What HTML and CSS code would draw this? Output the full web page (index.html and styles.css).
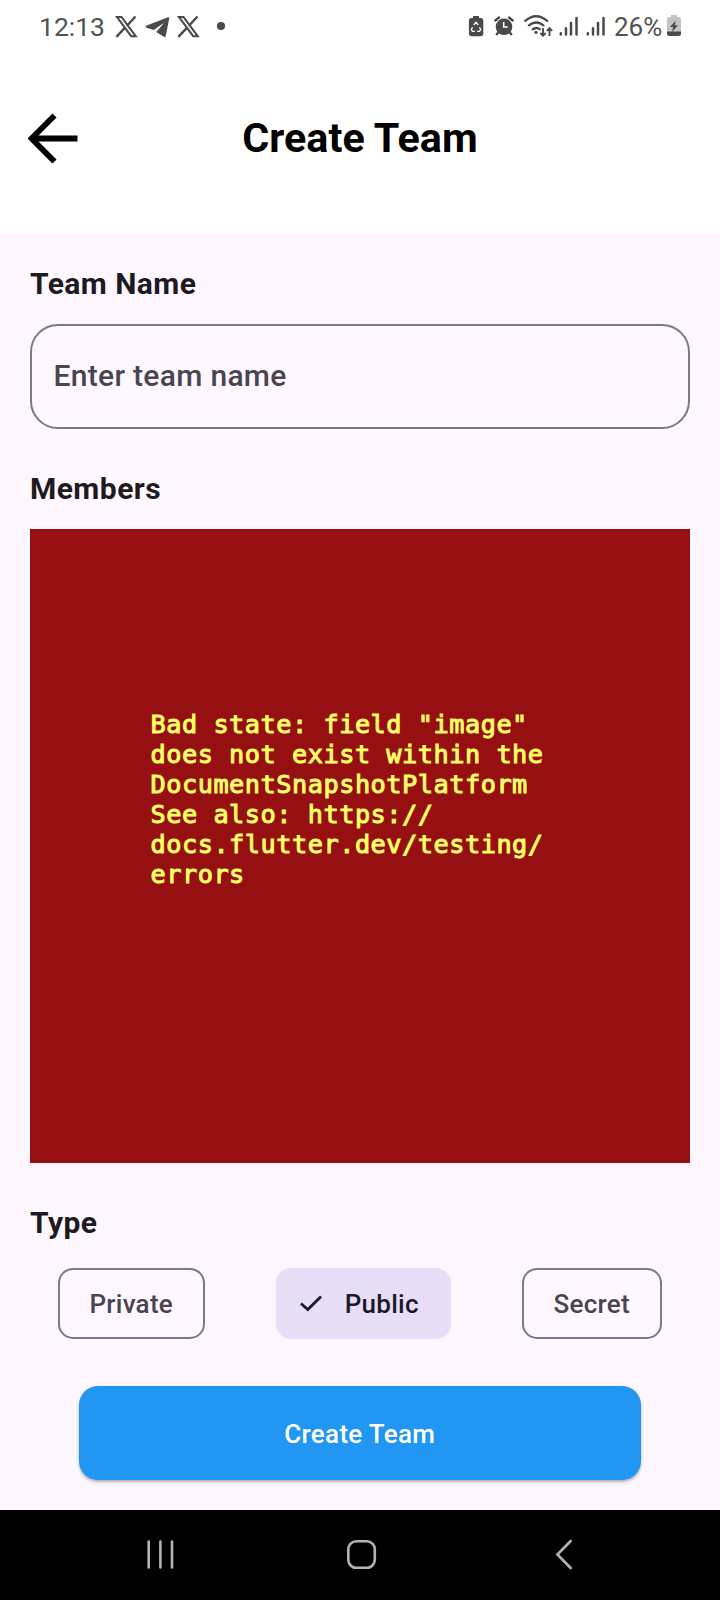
FILE: index.html
```html
<!DOCTYPE html>
<html lang="en">
<head>
<meta charset="utf-8">
<title>Create Team</title>
<link rel="stylesheet" href="styles.css">
</head>
<body>
<div class="screen">
  <div class="status">
    <span class="clock">12:13</span>
    <svg class="status-left" width="120" height="54" viewBox="110 0 120 54">
      <g fill="none" stroke="#4a4a4a">
        <g id="x-logo" stroke-width="2.1">
          <path d="M117 17h4.500l14.200 19.200h-4.500z"/>
          <path d="M135.500 16.500l-8.600 9.300M124.600 28.200l-8.200 8.600" stroke-width="2.400"/>
        </g>
        <use href="#x-logo" x="62"/>
      </g>
      <path d="M146 25.700L168 17.200q1.500-.3 1.200 1.200L165.800 36q-.5 1.500-2 .8l-7.600-4.700 8-9.300-10.500 7.300-7.300-2.400q-1.500-.8-.4-2z" fill="#4a4a4a"/>
      <circle cx="221" cy="26" r="4.100" fill="#4a4a4a"/>
    </svg>
    <svg class="status-right" width="148" height="54" viewBox="464 0 148 54">
      <path d="M473 16h6v2h2q2.300 0 2.300 2.500v13q0 2.700-2.700 2.700h-9q-2.700 0-2.700-2.700v-13q0-2.500 2.300-2.500h1.800z" fill="#4a4a4a"/>
      <path d="M473.800 25l2.200-2.800 2.200 2.800M479.500 27.300l1.200 2.300-1.200 1.700h-2.400M474.900 31.300h-2.400l-1.200-1.700 1.200-2.300" fill="none" stroke="#fff" stroke-width="1.300"/>
      <g fill="none" stroke="#4a4a4a">
        <circle cx="504" cy="26.800" r="8.300" fill="#4a4a4a" stroke="none"/>
        <path d="M495.300 20.500l3.700-3M512.700 20.500l-3.700-3" stroke-width="2.300" stroke-linecap="round"/>
        <path d="M498.500 32l-2.200 3M509.500 32l2.200 3" stroke-width="2.300"/>
        <path d="M503.700 22v5h4" stroke="#fff" stroke-width="1.500"/>
        <path d="M524.500 21.500q11.500-10.500 23.500 0M528.200 26q8-7 16 0M532 29.800q4.500-3.600 8.500 0" stroke-width="2.300"/>
        <path d="M543 28v8M540.300 33l2.700 2.700 2.700-2.700M549.500 36v-8M546.800 30.800l2.700-2.700 2.700 2.700" stroke-width="1.900"/>
        <g id="bars" stroke-width="2.500" stroke-linecap="round">
          <path d="M560.800 33.300v1.200M566 28.300v6.200M571 23v11.500M576.500 18v16.500"/>
        </g>
        <use href="#bars" x="27"/>
      </g>
      <circle cx="536" cy="32.300" r="1.600" fill="#4a4a4a"/>
    </svg>
    <span class="percent">26%</span>
    <svg class="battery" width="14" height="22" viewBox="0 0 14 22">
      <path d="M4 0h6v2h2q2 0 2 2.500V18H0V4.500Q0 2 2 2h2z" fill="#c2c2c2"/>
      <path d="M0 16.500h14v2q0 2.500-2.500 2.500h-9Q0 21 0 18.500z" fill="#4a4a4a"/>
      <path d="M8.700 5.500L3 12h3.200l-1.200 5 6-6.800H7.700z" fill="#4a4a4a"/>
    </svg>
  </div>
  <header class="header">
    <svg width="50" height="50" viewBox="0.5 -0.5 50 50"><path d="M27 2L4 25l23 23M4.500 25H50" fill="none" stroke="#000" stroke-width="5.800"/></svg>
    <h1 class="title">Create Team</h1>
  </header>
  <main class="content">
    <div class="label">Team Name</div>
    <div class="field">Enter team name</div>
    <div class="label members">Members</div>
    <div class="error">Bad state: field "image"<br>does not exist within the<br>DocumentSnapshotPlatform<br>See also: https://<br>docs.flutter.dev/testing/<br>errors</div>
    <div class="label type">Type</div>
    <div class="chips">
      <div class="chip private">Private</div>
      <div class="chip public"><svg width="22" height="17" viewBox="0 0 22 17"><path d="M1 8.500l6.800 6L21 1.500" fill="none" stroke="#1d192b" stroke-width="2.800"/></svg>Public</div>
      <div class="chip secret">Secret</div>
    </div>
    <button class="submit">Create Team</button>
  </main>
  <nav class="nav">
    <svg width="720" height="90" viewBox="0 1510 720 90" fill="none" stroke="#b3b3b3" stroke-width="2.600" stroke-linecap="round">
      <path d="M148.700 1541.500v26M160.400 1541.500v26M172 1541.500v26"/>
      <rect x="348.300" y="1541.300" width="26.500" height="26.500" rx="8"/>
      <path d="M570.700 1541l-13.300 13.500 13.300 13.500"/>
    </svg>
  </nav>
</div>
</body>
</html>
```
FILE: styles.css
```css
* { box-sizing: border-box; }
body { margin: 0; font-family: Roboto, "Liberation Sans", sans-serif; }
.screen { width: 720px; height: 1600px; display: flex; flex-direction: column; background: #fef7ff; overflow: hidden; }
.status { height: 54px; display: flex; align-items: center; background: #fff; color: #525252; font-size: 26px; padding-left: 39px; flex: none; }
.clock { width: 71px; font-size: 26.500px; font-weight: 400; padding-bottom: 2px; }
.status svg { flex: none; }
.status-right { margin-left: 234px; }
.percent { width: 55px; padding-left: 2px; padding-bottom: 1px; white-space: nowrap; font-size: 26px; font-weight: 400; }
.battery { margin-top: -2px; }
.header { height: 179px; flex: none; background: #fff; display: grid; grid-template-columns: 50px 1fr 50px; padding: 59px 28px 0; align-items: start; }
.title { margin: 0; font-size: 41.250px; line-height: 50px; font-weight: 700; text-align: center; color: #000; }
.content { flex: 1; padding: 0 30px; display: flex; flex-direction: column; }
.label { font-size: 30px; line-height: 40px; height: 40px; font-weight: 700; color: #1d1b20; margin-top: 31px; letter-spacing: .45px; }
.field { margin-top: 20px; height: 105px; border: 2px solid #7d7882; border-radius: 28px; padding: 0 21.500px; line-height: 99px; font-size: 30px; font-weight: 500; color: #49454f; letter-spacing: .3px; }
.members { margin-top: 40px; }
.error { margin-top: 20px; height: 634px; background: #960f11; padding: 181px 0 0 120.500px; font: 25.250px/30px "DejaVu Sans Mono", monospace; letter-spacing: .52px; color: #ffff66; -webkit-text-stroke: 1px #ffff66; white-space: nowrap; }
.type { margin-top: 40px; }
.chips { margin-top: 25px; height: 71px; display: flex; justify-content: space-between; padding: 0 28px 0 27.500px; }
.chip { border: 2px solid #7d7882; border-radius: 15px; display: flex; align-items: center; justify-content: center; font-size: 26px; font-weight: 500; color: #49454f; letter-spacing: .25px; }
.private { width: 147.500px; }
.public { width: 175px; border: 0; background: #e8def8; color: #1d192b; gap: 23px; padding-right: 8px; }
.secret { width: 140.500px; }
.submit { margin: 47px 49px 0 48.500px; height: 94px; border: 0; border-radius: 19px; background: #2196f3; color: #fff; font: 500 26px Roboto, sans-serif; letter-spacing: .3px; padding-top: 3px; box-shadow: 0 2px 3px rgba(0,0,0,.3); }
.nav { height: 90px; flex: none; background: #000; }
.nav svg { display: block; }
```
